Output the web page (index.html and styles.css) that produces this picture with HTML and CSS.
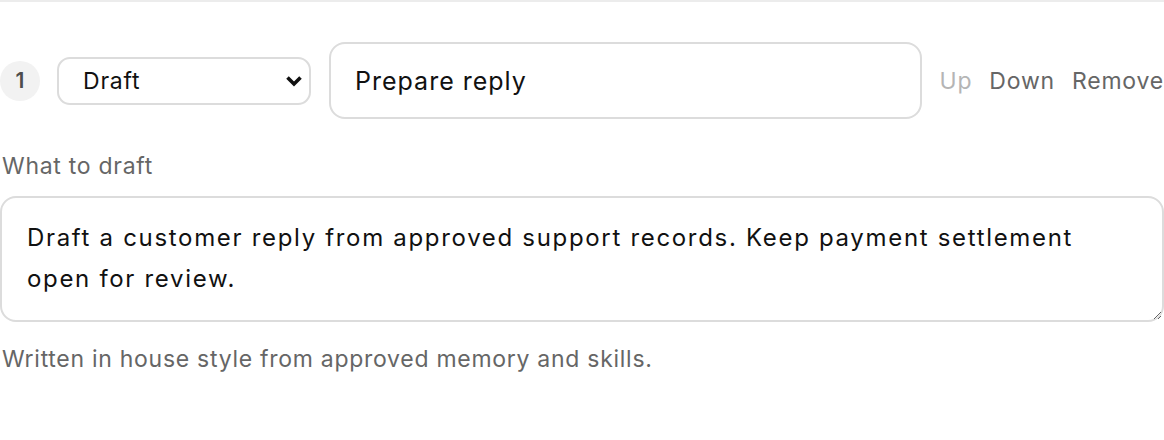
FILE: index.html
```html
<!DOCTYPE html>
<html lang="en">
<head>
    <meta charset="UTF-8">
    <meta name="viewport" content="width=device-width, initial-scale=1.0">
    <title>Step editor</title>
    <link rel="stylesheet" href="styles.css">
</head>
<body>

    <div class="step">
        <div class="step-head">
            <div class="step-num">1</div>

            <div class="select-wrap">
                <select class="step-kind">
                    <option selected>Draft</option>
                    <option>Review</option>
                    <option>Send</option>
                </select>
                <svg class="chevron" width="18" height="12" viewBox="0 0 18 12">
                    <polyline points="2.5,2.5 9,9 15.5,2.5" fill="none" stroke="#111" stroke-width="3.6"/>
                </svg>
            </div>

            <input class="step-title" type="text" value="Prepare reply">

            <div class="step-actions">
                <button class="link-btn" disabled>Up</button>
                <button class="link-btn">Down</button>
                <button class="link-btn">Remove</button>
            </div>
        </div>

        <label class="field-label" for="stepBody">What to draft</label>
        <textarea class="step-body" id="stepBody">Draft a customer reply from approved support records. Keep payment settlement open for review.</textarea>
        <p class="field-hint">Written in house style from approved memory and skills.</p>
    </div>

</body>
</html>
```

FILE: styles.css
```css
/* Base */
html, body {
    margin: 0;
    padding: 0;
    background: #ffffff;
    font-family: "Inter", "Liberation Sans", sans-serif;
    color: #111111;
    letter-spacing: 0.045em;
}

/* Step card */
.step {
    border-top: 2px solid #ececec;
    padding-top: 40px;
}

.step-head {
    display: flex;
    align-items: center;
    gap: 17px;
}

/* Number badge */
.step-num {
    flex: 0 0 40px;
    height: 40px;
    border-radius: 50%;
    background: #f2f2f2;
    color: #4d4d4d;
    font-size: 21px;
    font-weight: 600;
    letter-spacing: 0;
    display: flex;
    justify-content: center;
    align-items: center;
}

/* Kind select */
.select-wrap {
    position: relative;
    flex: 0 0 254px;
}

.step-kind {
    appearance: none;
    -webkit-appearance: none;
    width: 100%;
    height: 48px;
    padding: 0 40px 0 24px;
    border: 2px solid #dcdcdc;
    border-radius: 13px;
    background: #ffffff;
    font-family: inherit;
    font-size: 23px;
    letter-spacing: 0.035em;
    color: #111111;
}

.chevron {
    position: absolute;
    right: 8px;
    top: 18px;
    pointer-events: none;
}

/* Title input */
.step-title {
    flex: 1;
    min-width: 0;
    height: 77px;
    box-sizing: border-box;
    padding: 0 24px;
    border: 2px solid #dcdcdc;
    border-radius: 16px;
    font-family: inherit;
    font-size: 25px;
    letter-spacing: 0.04em;
    color: #111111;
    margin-left: 1px;
}

/* Up / Down / Remove */
.step-actions {
    display: flex;
    gap: 17px;
}

.link-btn {
    background: none;
    border: none;
    padding: 0;
    font-family: inherit;
    font-size: 23px;
    letter-spacing: 0.035em;
    color: #666666;
    cursor: pointer;
}

.link-btn:disabled {
    color: #b5b5b5;
    cursor: default;
}

/* Body field */
.field-label {
    display: block;
    margin-top: 33px;
    padding-left: 2px;
    font-size: 23px;
    color: #666666;
}

.step-body {
    display: block;
    width: 100%;
    height: 126px;
    box-sizing: border-box;
    margin-top: 16px;
    padding: 19px 40px 10px 25px;
    border: 2px solid #dcdcdc;
    border-radius: 16px;
    font-family: inherit;
    font-size: 24px;
    letter-spacing: 0.07em;
    line-height: 41px;
    color: #111111;
    resize: vertical;
}

.field-hint {
    margin: 23px 0 0;
    padding-left: 2px;
    font-size: 23px;
    color: #666666;
}
```
